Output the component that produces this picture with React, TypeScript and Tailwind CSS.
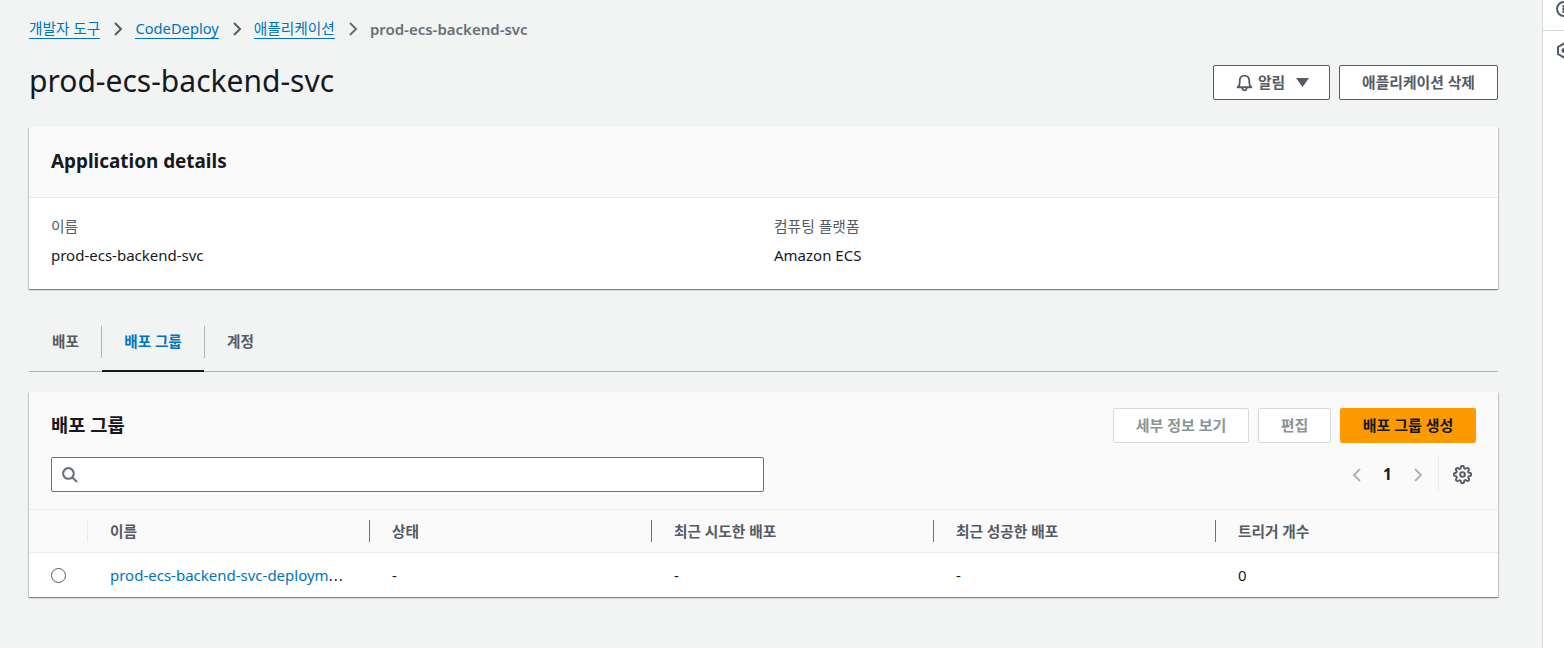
const font = { fontFamily: '"Noto Sans", "Noto Sans CJK KR", sans-serif' };

const columns = ["상태", "최근 시도한 배포", "최근 성공한 배포", "트리거 개수"];
const cells = ["-", "-", "-", "0"];

function Chevron({ className }: { className: string }) {
  return (
    <svg className={className} width="16" height="16" viewBox="0 0 16 16" fill="none" stroke="currentColor" strokeWidth="2">
      <path d="M5 2l6 6-6 6" />
    </svg>
  );
}

function Crumb({ text }: { text: string }) {
  return <a className="text-[#0073bb] border-b border-[#0073bb] leading-[19px]">{text}</a>;
}

export default function App() {
  return (
    <div className="flex h-[648px] w-[1564px] overflow-hidden bg-[#f2f3f3] text-[15px] text-[#16191f]" style={font}>
      <main className="w-[1542px] shrink-0 pl-[29px] pr-[44px]">
        <nav className="flex items-center h-[20px] mt-[19px] text-[14.7px]">
          <Crumb text="개발자 도구" />
          <Chevron className="ml-[10px] mr-[9px] text-[#545b64]" />
          <Crumb text="CodeDeploy" />
          <Chevron className="ml-[10px] mr-[9px] text-[#545b64]" />
          <Crumb text="애플리케이션" />
          <Chevron className="ml-[10px] mr-[9px] text-[#687078]" />
          <span className="font-semibold text-[15px] text-[#687078]">prod-ecs-backend-svc</span>
        </nav>

        <header className="flex items-center justify-between mt-[26px] h-[35px]">
          <h1 className="text-[30px] leading-[35px] font-normal -translate-y-[2px]">prod-ecs-backend-svc</h1>
          <div className="flex gap-[9px]">
            <button className="flex items-center justify-center w-[117px] h-[35px] pl-[2px] bg-white border border-[#545b64] rounded-[2px] font-semibold text-[#545b64] text-[14.8px]">
              <svg width="17" height="18" viewBox="0 0 16 17" fill="none" stroke="currentColor" strokeWidth="1.7" className="mr-[5px]">
                <path d="M1.5 12.5c1.5-1.2 2-2.5 2-4.5V6a4.5 4.5 0 019 0v2c0 2 .5 3.3 2 4.5h-13z" strokeLinejoin="round" />
                <path d="M6 13v.5a2 2 0 004 0V13" />
              </svg>
              <span>알림</span>
              <svg width="13" height="9" viewBox="0 0 13 9" className="ml-[11px] fill-[#545b64]">
                <path d="M0 0h13L6.5 9z" />
              </svg>
            </button>
            <button className="w-[159px] h-[35px] bg-white border border-[#545b64] rounded-[2px] font-semibold text-[#545b64] text-[14.8px]">
              애플리케이션 삭제
            </button>
          </div>
        </header>

        <section className="mt-[27px] bg-white shadow-[0_1px_1px_0_rgba(0,28,36,0.3),1px_1px_1px_0_rgba(0,28,36,0.15),-1px_1px_1px_0_rgba(0,28,36,0.15)]">
          <div className="flex items-center h-[71px] px-[22px] bg-[#fafafa] border-b border-[#eaeded]">
            <h2 className="text-[18.9px] font-bold leading-[24px] -translate-y-[1px]">Application details</h2>
          </div>
          <div className="grid grid-cols-[723px_1fr] h-[91px] pl-[22px] pt-[17px]">
            <div>
              <div className="text-[14.8px] text-[#545b64] leading-[22px]">이름</div>
              <div className="mt-[7px] leading-[22px]">prod-ecs-backend-svc</div>
            </div>
            <div>
              <div className="text-[14.8px] text-[#545b64] leading-[22px]">컴퓨팅 플랫폼</div>
              <div className="mt-[7px] leading-[22px]">Amazon ECS</div>
            </div>
          </div>
        </section>

        <div className="flex items-stretch h-[48px] mt-[35px] border-b border-[#aab7b8] font-semibold text-[#545b64] text-[14.6px] relative">
          <div className="flex items-center w-[73px] h-[32px] mt-[2px] pl-[23px] border-r border-[#aab7b8]">배포</div>
          <div className="relative w-[103px] h-[32px] mt-[2px] flex items-center justify-center border-r border-[#aab7b8] text-[#0073bb]">
            배포 그룹
          </div>
          <div className="flex items-center h-[32px] mt-[2px] pl-[22px]">계정</div>
          <div className="absolute left-[73px] bottom-[-1px] w-[102px] h-[2px] bg-[#16191f]" />
        </div>

        <section className="mt-[20px] bg-white shadow-[0_1px_1px_0_rgba(0,28,36,0.3),1px_1px_1px_0_rgba(0,28,36,0.15),-1px_1px_1px_0_rgba(0,28,36,0.15)]">
          <div className="bg-[#fafafa] border-b border-[#eaeded] h-[118px] pl-[22px] pr-[22px] pt-[16px]">
            <div className="flex items-center justify-between h-[35px]">
              <h2 className="text-[18.7px] font-bold leading-[24px] -translate-y-[1px]">배포 그룹</h2>
              <div className="flex gap-[9px] font-semibold text-[15px]">
                <button className="w-[136px] h-[35px] bg-white border border-[#d5dbdb] rounded-[2px] text-[#879596]">세부 정보 보기</button>
                <button className="w-[73px] h-[35px] bg-white border border-[#d5dbdb] rounded-[2px] text-[#879596]">편집</button>
                <button className="w-[136px] h-[35px] bg-[#ff9900] rounded-[2px] text-[#16191f]">배포 그룹 생성</button>
              </div>
            </div>
            <div className="flex items-center justify-between mt-[14px] h-[35px]">
              <div className="flex items-center w-[713px] h-[35px] px-[9px] bg-white border border-[#687078] rounded-[2px] text-[#687078]">
                <svg width="17" height="17" viewBox="0 0 16 16" fill="none" stroke="currentColor" strokeWidth="2">
                  <circle cx="7" cy="7" r="5" />
                  <path d="M10.5 10.5L15 15" />
                </svg>
              </div>
              <div className="flex items-center h-[35px]">
                <Chevron className="rotate-180 text-[#aab7b8]" />
                <span className="w-[45px] text-center font-bold text-[15.5px]">1</span>
                <Chevron className="text-[#aab7b8]" />
                <div className="w-px h-[35px] bg-[#eaeded] ml-[12px] mr-[14px]" />
                <svg width="19" height="19" viewBox="0 0 24 24" fill="none" stroke="#545b64" strokeWidth="2.4" strokeLinejoin="round" className="mr-[4px]">
                  <circle cx="12" cy="12" r="3" />
                  <path d="M19.4 15a1.65 1.65 0 00.33 1.82l.06.06a2 2 0 11-2.83 2.83l-.06-.06a1.65 1.65 0 00-2.9 1.17V21a2 2 0 11-4 0v-.09a1.65 1.65 0 00-2.82-1.16l-.06.06a2 2 0 11-2.83-2.83l.06-.06a1.65 1.65 0 00-1.18-2.82H3a2 2 0 110-4h.09a1.65 1.65 0 001.16-2.82l-.06-.06a2 2 0 112.83-2.83l.06.06a1.65 1.65 0 002.82-1.18V3a2 2 0 114 0v.09a1.65 1.65 0 002.82 1.16l.06-.06a2 2 0 112.83 2.83l-.06.06a1.65 1.65 0 001.18 2.82H21a2 2 0 110 4h-.09a1.65 1.65 0 00-1.51 1.1z" />
                </svg>
              </div>
            </div>
          </div>

          <div className="grid grid-cols-[59px_282px_282px_282px_282px_1fr] h-[43px] items-center bg-[#fafafa] border-b border-[#eaeded] font-semibold text-[#545b64] text-[14.7px]">
            <div className="h-[22px] border-r border-[#eaeded]" />
            <div className="h-[22px] pl-[22px] border-r border-[#687078] leading-[22px]">이름</div>
            {columns.map((c, i) => (
              <div key={c} className={`h-[22px] pl-[22px] leading-[22px] ${i < 3 ? "border-r border-[#687078]" : ""}`}>
                {c}
              </div>
            ))}
          </div>
          <div className="grid grid-cols-[59px_282px_282px_282px_282px_1fr] h-[44px] items-center">
            <div className="pl-[22px]">
              <div className="w-[15px] h-[15px] rounded-full border border-[#545b64]" />
            </div>
            <div className="pl-[22px] whitespace-nowrap">
              <a className="text-[#0073bb]">prod-ecs-backend-svc-deploym</a>
              <span className="tracking-[1px]">...</span>
            </div>
            {cells.map((c, i) => (
              <div key={i} className="pl-[22px]">{c}</div>
            ))}
          </div>
        </section>
      </main>

      <aside className="w-[22px] h-full bg-white border-l border-[#d5dbdb] overflow-hidden">
        <div className="h-[30px] border-b border-[#d5dbdb] pl-[13px]">
          <svg width="16" height="16" viewBox="0 0 16 16" fill="none" stroke="#545b64" strokeWidth="2" className="mt-[1px]">
            <circle cx="8" cy="8" r="7" />
            <path d="M6 5h4M8 5v6M6 8h4M6 11h4" strokeWidth="1.5" />
          </svg>
        </div>
        <div className="pl-[13px] pt-[11px]">
          <svg width="16" height="17" viewBox="0 0 16 16" fill="none" stroke="#545b64" strokeWidth="2">
            <path d="M8 1l6 3.5v7L8 15l-6-3.5v-7z" />
            <circle cx="8" cy="8" r="1.5" fill="#545b64" />
          </svg>
        </div>
      </aside>
    </div>
  );
}
